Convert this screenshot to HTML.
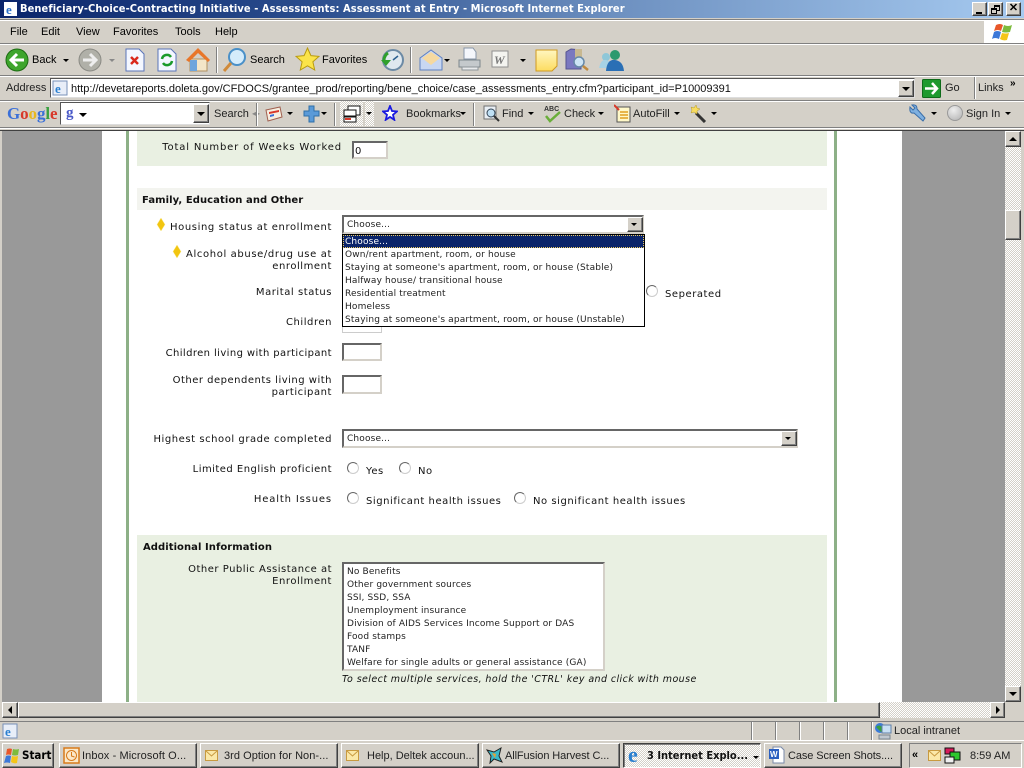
<!DOCTYPE html>
<html><head><meta charset="utf-8"><title>Assessment at Entry</title>
<style>
html,body{margin:0;padding:0}
body{width:1024px;height:768px;overflow:hidden;position:relative;background:#d4d0c8;font-family:"DejaVu Sans",sans-serif}
div,span,svg{position:absolute;box-sizing:border-box}
.t{white-space:nowrap;line-height:14px;height:14px;color:#000}
.c{font:11px/14px "Liberation Sans",sans-serif;letter-spacing:0;color:#000}
.f{font:10px/13px "DejaVu Sans",sans-serif;letter-spacing:.35px;white-space:nowrap;color:#111;height:13px;margin-top:1px}
.l{font:10px/13px "DejaVu Sans",sans-serif;letter-spacing:.55px;white-space:nowrap;color:#111;height:13px;text-align:right;right:692px;margin-top:1px}
.o{font:9px/13px "DejaVu Sans",sans-serif;letter-spacing:.15px;white-space:nowrap;color:#222;height:13px;margin-top:1px}
.sep{width:2px;border-left:1px solid #808080;border-right:1px solid #fff}
.hr{left:0;width:1024px;height:2px;border-top:1px solid #808080;border-bottom:1px solid #fff}
.inp{background:#fff;border:2px solid;border-color:#666 #d4d0c8 #d4d0c8 #666}
.btn{background:#d4d0c8;border:1px solid;border-color:#fff #404040 #404040 #fff;box-shadow:inset -1px -1px 0 #808080}
.arr{width:0;height:0;border-left:4px solid transparent;border-right:4px solid transparent;border-top:4px solid #000}
.rad{width:12px;height:12px;border-radius:50%;background:#fff;border:1.5px solid;border-color:#666 #ccc #ccc #666}
.task{height:25px;top:743px;background:#d4d0c8;border:1px solid;border-color:#fff #404040 #404040 #fff;box-shadow:inset -1px -1px 0 #808080}
.check{background-color:#eee;background-image:repeating-conic-gradient(#d4d0c8 0 25%,#fff 0 50%);background-size:2px 2px}
</style></head>
<body>
<!-- title bar -->
<div style="left:0;top:0;width:1024px;height:18px;background:linear-gradient(90deg,#0a246a 0,#2a4d8d 30%,#6d90c0 60%,#a6caf0 100%)"></div>
<svg style="left:3px;top:1px" width="16" height="16" viewBox="0 0 16 16"><rect x="1" y="1" width="13" height="14" fill="#fff"/><text x="3" y="13" font-size="13" font-weight="bold" fill="#2a6fc9" font-family="Liberation Serif">e</text></svg>
<div class="t" style="left:20px;top:2px;font:bold 11px/14px 'DejaVu Sans Condensed','Liberation Sans',sans-serif;color:#fff;letter-spacing:.08px">Beneficiary-Choice-Contracting Initiative - Assessments: Assessment at Entry - Microsoft Internet Explorer</div>
<div class="btn" style="left:972px;top:2px;width:15px;height:14px"><div style="left:3px;top:9px;width:6px;height:2px;background:#000"></div></div>
<div class="btn" style="left:988px;top:2px;width:15px;height:14px"><div style="left:5px;top:2px;width:6px;height:6px;border:1px solid #000;border-top-width:2px"></div><div style="left:2px;top:5px;width:6px;height:6px;border:1px solid #000;border-top-width:2px;background:#d4d0c8"></div></div>
<div class="btn" style="left:1006px;top:2px;width:15px;height:14px;font:bold 11px/11px 'Liberation Sans';text-align:center">✕</div>

<div class="hr" style="top:19px"></div>
<!-- menu -->
<div class="t c" style="left:10px;top:25px">File</div>
<div class="t c" style="left:41px;top:25px">Edit</div>
<div class="t c" style="left:76px;top:25px">View</div>
<div class="t c" style="left:113px;top:25px">Favorites</div>
<div class="t c" style="left:175px;top:25px">Tools</div>
<div class="t c" style="left:215px;top:25px">Help</div>
<div class="hr" style="top:43px"></div>
<div style="left:984px;top:20px;width:40px;height:23px;background:#fff"></div>
<svg style="left:992px;top:22px" width="22" height="20" viewBox="0 0 22 20"><path d="M4 3q4-2 7 0l-2 6q-3-2-7 0z" fill="#e8572a"/><path d="M12 3q4 2 8 0l-2 7q-4 1-8 0z" fill="#7dbb3c"/><path d="M2 10q3-2 7 0l-2 7q-4-2-7 0z" fill="#3c78d8"/><path d="M10 11q4 1 7 0l-2 7q-4 1-7-1z" fill="#f5c518"/></svg>

<!-- main toolbar -->
<svg style="left:5px;top:48px" width="24" height="24" viewBox="0 0 24 24"><circle cx="12" cy="12" r="11" fill="#3ea52c" stroke="#1c6b12"/><path d="M19 12H7M12 6l-6 6 6 6" stroke="#fff" stroke-width="3" fill="none"/></svg>
<div class="t c" style="left:32px;top:53px">Back</div>
<div class="arr" style="left:63px;top:59px;border-width:3px 3px 0;"></div>
<svg style="left:78px;top:48px" width="24" height="24" viewBox="0 0 24 24"><circle cx="12" cy="12" r="11" fill="#b0b0a8" stroke="#8a8a84"/><path d="M5 12h12M12 6l6 6-6 6" stroke="#eee" stroke-width="3" fill="none"/></svg>
<div class="arr" style="left:109px;top:59px;border-width:3px 3px 0;border-top-color:#888"></div>
<svg style="left:124px;top:48px" width="22" height="24" viewBox="0 0 22 24"><path d="M2 1h13l5 5v17H2z" fill="#f4f7ff" stroke="#5a74b8"/><path d="M7 9l7 7M14 9l-7 7" stroke="#d9281c" stroke-width="2.5"/></svg>
<svg style="left:156px;top:48px" width="22" height="24" viewBox="0 0 22 24"><path d="M2 1h13l5 5v17H2z" fill="#f4f7ff" stroke="#5a74b8"/><path d="M6 11a5 5 0 019-2M16 13a5 5 0 01-9 2" stroke="#1a9a2a" stroke-width="2.5" fill="none"/></svg>
<svg style="left:186px;top:47px" width="25" height="26" viewBox="0 0 25 26"><path d="M4 12v12h17V12z" fill="#f4e6c8" stroke="#b09060"/><path d="M0 13L12 1l12 12-2 2L12 6 3 15z" fill="#e8762a"/><rect x="4" y="13" width="7" height="11" fill="#6ea5dc"/></svg>
<div class="sep" style="left:216px;top:47px;height:26px"></div>
<svg style="left:222px;top:47px" width="26" height="26" viewBox="0 0 26 26"><circle cx="15" cy="10" r="8" fill="#d5ecfb" stroke="#4a90c8" stroke-width="2"/><path d="M9 16L2 24" stroke="#d08a3a" stroke-width="3"/></svg>
<div class="t c" style="left:250px;top:53px">Search</div>
<svg style="left:295px;top:47px" width="25" height="25" viewBox="0 0 25 25"><path d="M12.5 1l3.4 7.6 8.1.8-6.1 5.4 1.8 8.2-7.2-4.2L5.300 23l1.800-8.200L1 9.400l8.100-.8z" fill="#fbe44a" stroke="#b89a10"/></svg>
<div class="t c" style="left:322px;top:53px">Favorites</div>
<svg style="left:380px;top:48px" width="24" height="24" viewBox="0 0 24 24"><circle cx="13" cy="12" r="10" fill="#dfe8ef" stroke="#6c8aa5" stroke-width="2"/><path d="M1 12l5 6 5-6z" fill="#2fa02c"/><path d="M4 12a9 9 0 014-7" stroke="#2fa02c" stroke-width="3" fill="none"/><path d="M13 12l5-4" stroke="#2a5f90" stroke-width="1.500"/></svg>
<div class="sep" style="left:410px;top:47px;height:26px"></div>
<svg style="left:419px;top:48px" width="24" height="24" viewBox="0 0 24 24"><path d="M1 10L12 2l11 8v12H1z" fill="#c8d7f2" stroke="#5d7fc0"/><path d="M3 10l9 7 9-7-9-6z" fill="#f6d9a0"/></svg>
<div class="arr" style="left:444px;top:59px;border-width:3px 3px 0;"></div>
<svg style="left:457px;top:47px" width="25" height="25" viewBox="0 0 25 25"><path d="M7 1h9l3 4v7H7z" fill="#f4f6fb" stroke="#8896a8"/><path d="M2 13h21v7H2z" fill="#c4c9cc" stroke="#7d868c"/><path d="M5 20h16v3H5z" fill="#e8eaec" stroke="#8d9499"/></svg>
<svg style="left:491px;top:50px" width="19" height="19" viewBox="0 0 19 19"><rect x="1" y="1" width="16" height="16" fill="#f4f4f0" stroke="#909090"/><text x="3" y="14" font-size="12" font-weight="bold" font-style="italic" fill="#777" font-family="Liberation Serif">W</text></svg>
<div class="arr" style="left:520px;top:59px;border-width:3px 3px 0;"></div>
<svg style="left:535px;top:49px" width="23" height="23" viewBox="0 0 23 23"><defs><linearGradient id="ng" x1="0" y1="0" x2="0" y2="1"><stop offset="0" stop-color="#fff6c0"/><stop offset="1" stop-color="#fddc60"/></linearGradient></defs><path d="M1 1h21v16l-5 5H1z" fill="url(#ng)" stroke="#d09a20"/></svg>
<svg style="left:565px;top:48px" width="24" height="24" viewBox="0 0 24 24"><path d="M1 4l5-3 10 1v19H1z" fill="#7a78c0" stroke="#55538f"/><path d="M10 1h7v10h-7z" fill="#c8b890"/><circle cx="14" cy="14" r="5" fill="#cde4f5" stroke="#6788a8" stroke-width="1.500"/><path d="M18 18l5 4" stroke="#c08a40" stroke-width="2.500"/></svg>
<svg style="left:598px;top:49px" width="26" height="23" viewBox="0 0 26 23"><circle cx="8" cy="8" r="4" fill="#8fc7d8"/><path d="M1 19q2-9 7-8t5 8z" fill="#a7d2e5"/><circle cx="17" cy="6" r="5" fill="#2c9a6e"/><path d="M8 22q1-12 9-11t9 11z" fill="#2a6fb5"/></svg>
<div class="hr" style="top:75px"></div>

<!-- address -->
<div class="t c" style="left:6px;top:81px;color:#222">Address</div>
<div style="left:50px;top:78px;width:865px;height:20px;background:#fff;border:1px solid;border-color:#555 #ddd #ddd #555"></div>
<svg style="left:52px;top:80px" width="16" height="16" viewBox="0 0 16 16"><rect x="1" y="1" width="14" height="14" fill="#e8eef8" stroke="#7790b8"/><text x="3" y="13" font-size="13" font-weight="bold" fill="#2a7fd0" font-family="Liberation Serif">e</text></svg>
<div class="t c" style="left:71px;top:82px;color:#111">http://devetareports.doleta.gov/CFDOCS/grantee_prod/reporting/bene_choice/case_assessments_entry.cfm?participant_id=P10009391</div>
<div class="btn" style="left:898px;top:80px;width:16px;height:17px"><div class="arr" style="left:3px;top:6px"></div></div>
<svg style="left:922px;top:79px" width="19" height="19" viewBox="0 0 19 19"><rect x=".5" y=".5" width="18" height="18" rx="1" fill="#1d9a2e" stroke="#0e6b1a"/><path d="M3 9.500h11M10 4l5 5.500-5 5.500" stroke="#fff" stroke-width="2.500" fill="none"/></svg>
<div class="t c" style="left:945px;top:81px;color:#222">Go</div>
<div class="sep" style="left:974px;top:77px;height:22px"></div>
<div class="t c" style="left:978px;top:81px;color:#222">Links</div>
<div class="t" style="left:1010px;top:77px;font:bold 10px/14px 'Liberation Sans'">»</div>
<div class="hr" style="top:100px"></div>

<!-- google bar -->
<div class="t" style="left:7px;top:106px;font:bold 17px/16px 'Liberation Serif',serif;letter-spacing:-.1px"><span style="position:static;color:#3a6fd8">G</span><span style="position:static;color:#d8382a">o</span><span style="position:static;color:#e8b820">o</span><span style="position:static;color:#3a6fd8">g</span><span style="position:static;color:#3aa040">l</span><span style="position:static;color:#d8382a">e</span></div>
<div style="left:60px;top:102px;width:150px;height:23px;background:#fff;border:1px solid;border-color:#555 #ddd #ddd #555"></div>
<div class="t" style="left:66px;top:105px;font:bold 15px/16px 'Liberation Serif',serif;color:#4858c8">g</div>
<div class="arr" style="left:79px;top:113px"></div>
<div class="btn" style="left:193px;top:104px;width:16px;height:19px"><div class="arr" style="left:3px;top:7px"></div></div>
<div class="t c" style="left:214px;top:107px;color:#222">Search</div>
<div class="t" style="left:252px;top:107px;font:8px/14px 'Liberation Sans';color:#888">◂▸</div>
<div class="sep" style="left:256px;top:103px;height:23px"></div>
<svg style="left:265px;top:106px" width="18" height="16" viewBox="0 0 18 16"><path d="M1 4l14-3 2 10-14 4z" fill="#f6eee0" stroke="#a06050"/><path d="M4 6l10-2v2l-10 2z" fill="#d8382a"/><path d="M5 9l4-1v2l-4 1z" fill="#3a6fd8"/></svg>
<div class="arr" style="left:287px;top:112px;border-width:3px 3px 0;"></div>
<svg style="left:303px;top:105px" width="17" height="18" viewBox="0 0 17 18"><path d="M6 1h5v5h5v5h-5v6H6v-6H1V6h5z" fill="#5a9ad8" stroke="#2f6fa8"/></svg>
<div class="arr" style="left:321px;top:112px;border-width:3px 3px 0;"></div>
<div class="sep" style="left:334px;top:103px;height:23px"></div>
<div class="check" style="left:340px;top:101px;width:23px;height:25px"></div>
<svg style="left:343px;top:105px" width="18" height="18" viewBox="0 0 18 18"><rect x="5" y="1" width="12" height="9" fill="#fff" stroke="#111"/><rect x="1" y="5" width="12" height="6" fill="#fff" stroke="#111"/><rect x="1" y="12" width="12" height="5" fill="#fff" stroke="#111"/><rect x="2" y="13" width="6" height="2" fill="#d8382a"/></svg>
<div class="check" style="left:365px;top:101px;width:9px;height:25px"></div>
<div class="arr" style="left:366px;top:112px;border-width:3px 3px 0;"></div>
<svg style="left:382px;top:105px" width="16" height="16" viewBox="0 0 16 16"><path d="M8 1l2 5 5 .4-4 3.400 1.300 5L8 12l-4.300 2.800L5 9.800 1 6.400 6 6z" fill="#fff" stroke="#1a1ae0" stroke-width="1.800"/></svg>
<div class="t c" style="left:406px;top:107px;color:#222">Bookmarks</div>
<div class="arr" style="left:460px;top:112px;border-width:3px 3px 0;"></div>
<div class="sep" style="left:473px;top:103px;height:23px"></div>
<svg style="left:483px;top:105px" width="17" height="18" viewBox="0 0 17 18"><rect x="1" y="1" width="12" height="13" fill="#e8eef4" stroke="#707070"/><circle cx="8" cy="8" r="4" fill="#bfe0f5" stroke="#345"/><path d="M11 11l5 5" stroke="#333" stroke-width="2"/></svg>
<div class="t c" style="left:502px;top:107px;color:#222">Find</div>
<div class="arr" style="left:528px;top:112px;border-width:3px 3px 0;"></div>
<svg style="left:544px;top:104px" width="18" height="19" viewBox="0 0 18 19"><text x="0" y="7" font-size="7" font-weight="bold" font-family="Liberation Sans" fill="#333">ABC</text><path d="M2 12l4 5 10-9" stroke="#6aae3a" stroke-width="2.500" fill="none"/></svg>
<div class="t c" style="left:564px;top:107px;color:#222">Check</div>
<div class="arr" style="left:598px;top:112px;border-width:3px 3px 0;"></div>
<svg style="left:614px;top:104px" width="17" height="19" viewBox="0 0 17 19"><path d="M3 3h13v15H3z" fill="#fff8c8" stroke="#555"/><path d="M6 8h8M6 11h8M6 14h8" stroke="#e0a020" stroke-width="1.500"/><path d="M0 1l5 5" stroke="#d8382a" stroke-width="2"/></svg>
<div class="t c" style="left:633px;top:107px;color:#222">AutoFill</div>
<div class="arr" style="left:674px;top:112px;border-width:3px 3px 0;"></div>
<svg style="left:689px;top:104px" width="18" height="19" viewBox="0 0 18 19"><path d="M7 9l9 9" stroke="#333" stroke-width="3"/><path d="M2 3l3 1 2-3 1 3 3 1-3 2v3L5 8 2 9l1-3z" fill="#f8dc60" stroke="#b89a20" stroke-width=".5"/></svg>
<div class="arr" style="left:711px;top:112px;border-width:3px 3px 0;"></div>
<svg style="left:909px;top:104px" width="17" height="18" viewBox="0 0 17 18"><path d="M1 3l3 3 2-2-3-3q5-1 5 4l8 9-2 3-9-8q-5 1-4-6z" fill="#7fb0e0" stroke="#3a6ea8"/></svg>
<div class="arr" style="left:931px;top:112px;border-width:3px 3px 0;"></div>
<div style="left:947px;top:105px;width:16px;height:16px;border-radius:50%;background:radial-gradient(circle at 40% 30%,#eee,#b0b0b0);border:1px solid #999"></div>
<div class="t c" style="left:966px;top:107px;color:#222">Sign In</div>
<div class="arr" style="left:1005px;top:112px;border-width:3px 3px 0;"></div>
<div class="hr" style="top:127px"></div>

<!-- viewport -->
<div style="left:0;top:130px;width:1024px;height:1px;background:#404040"></div>
<div style="left:2px;top:131px;width:1003px;height:571px;background:#999"></div>
<div style="left:102px;top:131px;width:800px;height:571px;background:#fff"></div>
<div style="left:126px;top:131px;width:3px;height:571px;background:#8db087"></div>
<div style="left:834px;top:131px;width:3px;height:571px;background:#8db087"></div>
<div style="left:137px;top:131px;width:690px;height:35px;background:#e9f0e2"></div>
<div style="left:137px;top:188px;width:690px;height:22px;background:#f3f4ef"></div>
<div style="left:137px;top:535px;width:690px;height:167px;background:#e9f0e2"></div>

<div class="l" style="top:140px;right:682px;letter-spacing:.85px">Total Number of Weeks Worked</div>
<div class="inp" style="left:352px;top:141px;width:36px;height:18px"></div>
<div class="f" style="left:355px;top:144px">0</div>

<div class="f" style="left:142px;top:193px;font-weight:bold;letter-spacing:.07px">Family, Education and Other</div>

<svg style="left:156px;top:218px" width="10" height="13" viewBox="0 0 10 13"><path d="M5 0l4 6.500-4 6.500-4-6.500z" fill="#f2c510" stroke="#f8e98a" stroke-width=".5"/></svg>
<div class="l" style="top:220px;letter-spacing:.6px">Housing status at enrollment</div>
<svg style="left:172px;top:245px" width="10" height="13" viewBox="0 0 10 13"><path d="M5 0l4 6.500-4 6.500-4-6.500z" fill="#f2c510" stroke="#f8e98a" stroke-width=".5"/></svg>
<div class="l" style="top:247px;letter-spacing:.62px">Alcohol abuse/drug use at</div>
<div class="l" style="top:259px">enrollment</div>
<div class="l" style="top:285px">Marital status</div>
<div class="l" style="top:315px">Children</div>
<div class="l" style="top:346px;letter-spacing:.4px">Children living with participant</div>
<div class="l" style="top:373px;letter-spacing:.5px">Other dependents living with</div>
<div class="l" style="top:385px">participant</div>
<div class="l" style="top:432px">Highest school grade completed</div>
<div class="l" style="top:462px;letter-spacing:.47px">Limited English proficient</div>
<div class="l" style="top:492px;letter-spacing:.85px">Health Issues</div>

<!-- housing select -->
<div class="inp" style="left:342px;top:215px;width:302px;height:19px"></div>
<div class="o" style="left:347px;top:218px">Choose...</div>
<div class="btn" style="left:627px;top:217px;width:16px;height:15px"><div class="arr" style="left:3px;top:5px;border-width:3px 3px 0"></div></div>

<div style="left:342px;top:315px;width:40px;height:18px;border:1px solid #ccc"></div>
<!-- dropdown list -->
<div style="left:342px;top:234px;width:303px;height:93px;background:#fff;border:1px solid #000"></div>
<div style="left:343px;top:235px;width:301px;height:13px;background:#0a246a;outline:1px dotted #e8c860;outline-offset:-1px"></div>
<div class="o" style="left:345px;top:235px;color:#fff">Choose...</div>
<div class="o" style="left:345px;top:248px">Own/rent apartment, room, or house</div>
<div class="o" style="left:345px;top:261px">Staying at someone's apartment, room, or house (Stable)</div>
<div class="o" style="left:345px;top:274px">Halfway house/ transitional house</div>
<div class="o" style="left:345px;top:287px">Residential treatment</div>
<div class="o" style="left:345px;top:300px">Homeless</div>
<div class="o" style="left:345px;top:313px">Staying at someone's apartment, room, or house (Unstable)</div>

<div class="rad" style="left:646px;top:285px"></div>
<div class="f" style="left:665px;top:287px;letter-spacing:.55px">Seperated</div>

<div class="inp" style="left:342px;top:343px;width:40px;height:18px"></div>
<div class="inp" style="left:342px;top:375px;width:40px;height:19px"></div>

<!-- grade select -->
<div class="inp" style="left:342px;top:429px;width:456px;height:19px"></div>
<div class="o" style="left:347px;top:432px">Choose...</div>
<div class="btn" style="left:781px;top:431px;width:16px;height:15px"><div class="arr" style="left:3px;top:5px;border-width:3px 3px 0"></div></div>

<div class="rad" style="left:347px;top:462px"></div>
<div class="f" style="left:366px;top:464px;letter-spacing:.55px">Yes</div>
<div class="rad" style="left:399px;top:462px"></div>
<div class="f" style="left:418px;top:464px;letter-spacing:.55px">No</div>
<div class="rad" style="left:347px;top:492px"></div>
<div class="f" style="left:366px;top:494px;letter-spacing:.55px">Significant health issues</div>
<div class="rad" style="left:514px;top:492px"></div>
<div class="f" style="left:533px;top:494px;letter-spacing:.55px">No significant health issues</div>

<div class="f" style="left:143px;top:540px;font-weight:bold;letter-spacing:.06px">Additional Information</div>
<div class="l" style="top:562px;letter-spacing:.5px">Other Public Assistance at</div>
<div class="l" style="top:574px">Enrollment</div>

<div class="inp" style="left:342px;top:562px;width:263px;height:109px"></div>
<div class="o" style="left:347px;top:565px">No Benefits</div>
<div class="o" style="left:347px;top:578px">Other government sources</div>
<div class="o" style="left:347px;top:591px">SSI, SSD, SSA</div>
<div class="o" style="left:347px;top:604px">Unemployment insurance</div>
<div class="o" style="left:347px;top:617px">Division of AIDS Services Income Support or DAS</div>
<div class="o" style="left:347px;top:630px">Food stamps</div>
<div class="o" style="left:347px;top:643px">TANF</div>
<div class="o" style="left:347px;top:656px">Welfare for single adults or general assistance (GA)</div>
<div class="f" style="left:342px;top:672px;font-style:italic;font-size:9.5px;letter-spacing:.41px">To select multiple services, hold the 'CTRL' key and click with mouse</div>

<!-- vertical scrollbar -->
<div class="check" style="left:1005px;top:131px;width:16px;height:571px"></div>
<div class="btn" style="left:1005px;top:131px;width:16px;height:16px"><div class="arr" style="left:3px;top:5px;border-width:0 4px 4px;border-top:0;border-bottom:4px solid #000"></div></div>
<div class="btn" style="left:1005px;top:210px;width:16px;height:30px"></div>
<div class="btn" style="left:1005px;top:686px;width:16px;height:16px"><div class="arr" style="left:3px;top:5px"></div></div>
<!-- horizontal scrollbar -->
<div class="check" style="left:2px;top:702px;width:1003px;height:16px"></div>
<div class="btn" style="left:2px;top:702px;width:16px;height:16px"><div style="left:5px;top:3px;width:0;height:0;border-top:4px solid transparent;border-bottom:4px solid transparent;border-right:4px solid #000"></div></div>
<div class="btn" style="left:18px;top:702px;width:862px;height:16px"></div>
<div class="btn" style="left:990px;top:702px;width:15px;height:16px"><div style="left:5px;top:3px;width:0;height:0;border-top:4px solid transparent;border-bottom:4px solid transparent;border-left:4px solid #000"></div></div>

<!-- status bar -->
<div style="left:0;top:721px;width:1024px;height:1px;background:#808080"></div>
<div style="left:0;top:740px;width:1024px;height:1px;background:#fff"></div>
<svg style="left:2px;top:723px" width="16" height="16" viewBox="0 0 16 16"><rect x="1" y="1" width="14" height="14" fill="#e8eef8" stroke="#7790b8"/><text x="3" y="13" font-size="13" font-weight="bold" fill="#2a7fd0" font-family="Liberation Serif">e</text></svg>
<div class="sep" style="left:751px;top:722px;height:18px"></div>
<div class="sep" style="left:775px;top:722px;height:18px"></div>
<div class="sep" style="left:799px;top:722px;height:18px"></div>
<div class="sep" style="left:823px;top:722px;height:18px"></div>
<div class="sep" style="left:847px;top:722px;height:18px"></div>
<div class="sep" style="left:871px;top:722px;height:18px"></div>
<svg style="left:874px;top:722px" width="18" height="18" viewBox="0 0 18 18"><circle cx="6" cy="6" r="5" fill="#3a7ad8"/><path d="M2 5q3-3 6 0t-1 5z" fill="#3aa040"/><rect x="8" y="3" width="9" height="8" fill="#c8e0f4" stroke="#6080a8"/><rect x="5" y="13" width="11" height="4" fill="#c0c8d0" stroke="#7a8690"/></svg>
<div class="t c" style="left:894px;top:724px;color:#222">Local intranet</div>

<!-- taskbar -->
<div style="left:0;top:741px;width:1024px;height:27px;background:#d4d0c8"></div>
<div class="task" style="left:2px;width:52px"></div>
<svg style="left:4px;top:748px" width="16" height="16" viewBox="0 0 16 16"><path d="M3 1q3-1 5 0L7 7q-3-1-5 0z" fill="#e8572a"/><path d="M9 1q3 1 6 0l-1 6q-3 1-6 0z" fill="#7dbb3c"/><path d="M2 8q3-1 5 0l-1 7q-3-1-6 0z" fill="#3c78d8"/><path d="M8 8q3 1 6 0l-1 7q-3 1-6-1z" fill="#f5c518"/></svg>
<div class="t" style="left:22px;top:748px;font:bold 11.500px/14px 'DejaVu Sans Condensed','Liberation Sans',sans-serif">Start</div>

<div class="task" style="left:59px;width:138px"></div>
<svg style="left:63px;top:747px" width="17" height="17" viewBox="0 0 17 17"><rect x="1" y="1" width="15" height="15" fill="#fbe8c8" stroke="#d87a1a" stroke-width="1.500"/><circle cx="8.500" cy="8.500" r="5" fill="none" stroke="#d87a1a"/><path d="M8.500 5v4l3 1" stroke="#d87a1a" fill="none"/></svg>
<div class="t c" style="left:82px;top:749px;color:#222;letter-spacing:.1px">Inbox - Microsoft O...</div>

<div class="task" style="left:200px;width:138px"></div>
<svg style="left:205px;top:750px" width="13" height="11" viewBox="0 0 13 11"><rect x=".5" y=".5" width="12" height="10" fill="#fbe8a8" stroke="#c89a40"/><path d="M1 1l5.500 5L12 1" fill="none" stroke="#c89a40"/></svg>
<div class="t c" style="left:224px;top:749px;color:#222;letter-spacing:.05px">3rd Option for Non-...</div>

<div class="task" style="left:341px;width:138px"></div>
<svg style="left:346px;top:750px" width="13" height="11" viewBox="0 0 13 11"><rect x=".5" y=".5" width="12" height="10" fill="#fbe8a8" stroke="#c89a40"/><path d="M1 1l5.500 5L12 1" fill="none" stroke="#c89a40"/></svg>
<div class="t c" style="left:367px;top:749px;color:#222">Help, Deltek accoun...</div>

<div class="task" style="left:482px;width:138px"></div>
<svg style="left:486px;top:747px" width="17" height="17" viewBox="0 0 17 17"><path d="M1 3l7 2 7-4-2 8 3 6-8-3-4 4 1-7z" fill="#3ab8c8" stroke="#222"/><path d="M6 6l4 1-1 4z" fill="#e8a030"/></svg>
<div class="t c" style="left:505px;top:749px;color:#222;letter-spacing:-.1px">AllFusion Harvest C...</div>

<div class="task check" style="left:623px;width:138px;border-color:#404040 #fff #fff #404040;box-shadow:inset 1px 1px 0 #808080"></div>
<svg style="left:628px;top:746px" width="17" height="19" viewBox="0 0 17 19"><text x="0" y="16" font-size="22" font-weight="bold" fill="#2a7fd0" font-family="Liberation Serif">e</text></svg>
<div class="t" style="left:647px;top:749px;font:bold 11px/14px 'DejaVu Sans Condensed','Liberation Sans',sans-serif;color:#111">3 Internet Explo...</div>
<div class="arr" style="left:753px;top:756px;border-width:3px 3px 0;"></div>

<div class="task" style="left:764px;width:138px"></div>
<svg style="left:768px;top:746px" width="17" height="18" viewBox="0 0 17 18"><path d="M5 1h8l3 3v13H5z" fill="#fff" stroke="#7a8aa8"/><rect x="1" y="3" width="10" height="10" fill="#2a5fc0"/><text x="2" y="11" font-size="8" font-weight="bold" fill="#fff" font-family="Liberation Sans">W</text></svg>
<div class="t c" style="left:788px;top:749px;color:#222;letter-spacing:-.1px">Case Screen Shots....</div>

<div style="left:909px;top:743px;width:113px;height:25px;border:1px solid;border-color:#808080 #fff #fff #808080"></div>
<div class="t" style="left:912px;top:748px;font:bold 11px/14px 'Liberation Sans'">«</div>
<svg style="left:928px;top:750px" width="13" height="11" viewBox="0 0 13 11"><rect x=".5" y=".5" width="12" height="10" fill="#fbe8a8" stroke="#c89a40"/><path d="M1 1l5.500 5L12 1" fill="none" stroke="#c89a40"/></svg>
<svg style="left:944px;top:747px" width="17" height="17" viewBox="0 0 17 17"><rect x="1" y="1" width="9" height="6" fill="#d81a5a" stroke="#111"/><rect x="6" y="5" width="10" height="8" fill="#2ec82e" stroke="#111"/><rect x="1" y="10" width="9" height="6" fill="#eee" stroke="#111"/></svg>
<div class="t c" style="left:970px;top:749px;color:#222">8:59 AM</div>
</body></html>
